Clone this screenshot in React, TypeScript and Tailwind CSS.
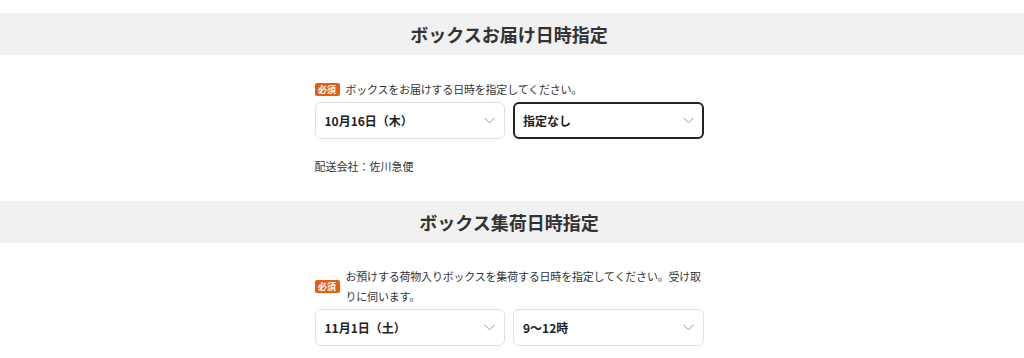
import { ReactNode } from 'react'

const FONT = "font-['Noto_Sans_CJK_JP','Noto_Sans',sans-serif]"

function SectionTitle({ children }: { children: ReactNode }) {
  return (
    <div className="h-[42px] bg-[#f1f1f1] flex items-center justify-center pr-[6px]">
      <h2 className="text-[18px] font-bold text-[#333] leading-none">{children}</h2>
    </div>
  )
}

function Badge() {
  return (
    <span className="flex-none inline-flex items-center justify-center w-[25px] h-[13px] rounded-[2px] bg-[#e2600f] text-white text-[9px] font-bold leading-none">
      必須
    </span>
  )
}

function Chevron() {
  return (
    <svg width="11" height="7" viewBox="0 0 11 7" className="flex-none">
      <polyline points="0.5,0.8 5.5,5.8 10.5,0.8" fill="none" stroke="#9a9a9a" strokeWidth="1" />
    </svg>
  )
}

function Select({ value, focused = false }: { value: string; focused?: boolean }) {
  return (
    <div
      className={[
        'flex-1 h-[37px] flex items-center justify-between rounded-[6px] bg-white',
        focused ? 'border-2 border-[#222] pl-[8px] pr-[8px]' : 'border border-[#e1e1e1] pl-[9px] pr-[9px]',
      ].join(' ')}
    >
      <span className="text-[12px] font-bold text-[#222]">{value}</span>
      <Chevron />
    </div>
  )
}

export default function App() {
  return (
    <div className={`${FONT} bg-white min-h-[358px] pt-[13px] text-[#333]`}>
      <SectionTitle>ボックスお届け日時指定</SectionTitle>

      <div className="flex justify-center pr-[6px]">
        <div className="w-[389px] pt-[24px]">
          <div className="flex items-center gap-[6px] h-[20px]">
            <Badge />
            <p className="text-[11px] tracking-[-0.2px] leading-[20px]">ボックスをお届けする日時を指定してください。</p>
          </div>
          <div className="flex gap-[8px] mt-[3px]">
            <Select value="10月16日（木）" />
            <Select value="指定なし" focused />
          </div>
          <p className="text-[11px] leading-[20px] mt-[17px]">配送会社：佐川急便</p>
        </div>
      </div>

      <div className="mt-[25px]">
        <SectionTitle>ボックス集荷日時指定</SectionTitle>
      </div>

      <div className="flex justify-center pr-[6px]">
        <div className="w-[389px] pt-[23px]">
          <div className="flex items-center gap-[6px]">
            <Badge />
            <p className="text-[11px] tracking-[-0.2px] leading-[20px]">
              お預けする荷物入りボックスを集荷する日時を指定してください。受け取
              <br />
              りに伺います。
            </p>
          </div>
          <div className="flex gap-[8px] mt-[3px]">
            <Select value="11月1日（土）" />
            <Select value="9〜12時" />
          </div>
        </div>
      </div>
    </div>
  )
}
